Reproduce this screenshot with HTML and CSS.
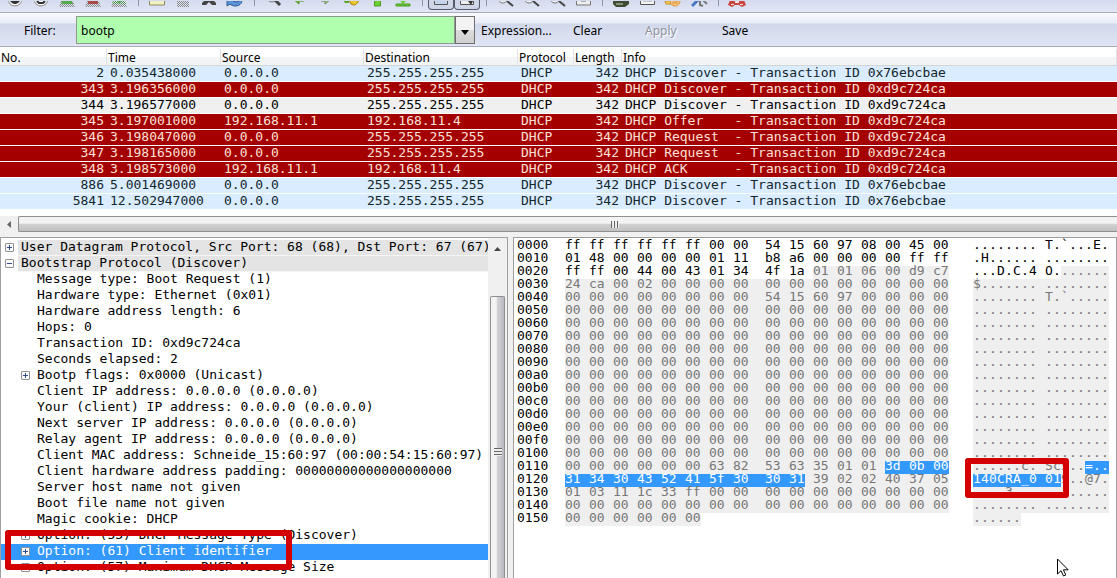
FILE: index.html
```html
<!DOCTYPE html>
<html lang="en">
<head>
    <meta charset="UTF-8">
    <meta name="viewport" content="width=device-width, initial-scale=1.0">
    <title>bootp - Packet Capture</title>
    <link rel="stylesheet" href="styles.css">
</head>
<body>
    <svg class="defs" width="0" height="0">
        <defs>
            <pattern id="hatch-green" width="2" height="2" patternUnits="userSpaceOnUse"><path d="M0 0h1v1H0zM1 1h1v1H1z" fill="#4c9a45"/></pattern>
            <pattern id="hatch-gray" width="2" height="2" patternUnits="userSpaceOnUse"><path d="M0 0h1v1H0zM1 1h1v1H1z" fill="#8c8c8c"/></pattern>
        </defs>
    </svg>

    <div class="toolbar" role="toolbar" aria-label="Main toolbar">
        <div class="tool-group">
            <button class="tool" aria-label="Interfaces"><svg viewBox="0 0 20 8"><circle cx="10" cy="-2" r="7" fill="#f4f4f4" stroke="#888"/><path d="M5 0h10l-2 2-2 1H9L7 2z" fill="#333"/></svg></button>
            <button class="tool" aria-label="Options"><svg viewBox="0 0 20 8"><circle cx="10" cy="-2" r="7" fill="#f4f4f4" stroke="#888"/><path d="M6 0l2 2h4l2-2" fill="none" stroke="#333" stroke-width="2"/></svg></button>
            <button class="tool" aria-label="Start"><svg viewBox="0 0 20 8"><path d="M4 0h12l2 6H2z" fill="url(#hatch-gray)"/><path d="M5 0h10l1 3H4z" fill="#58a850"/></svg></button>
            <button class="tool" aria-label="Stop"><svg viewBox="0 0 20 8"><path d="M4 0h12l2 6H2z" fill="url(#hatch-gray)"/><path d="M5 0h10v3H5z" fill="#a84848"/></svg></button>
            <button class="tool" aria-label="Restart"><svg viewBox="0 0 20 8"><path d="M4 0h12l2 6H2z" fill="url(#hatch-gray)"/><path d="M4 0h12l1 3H3z" fill="url(#hatch-green)"/><path d="M8 0h4l-1 2H9z" fill="#58a850"/></svg></button>
        </div>
        <span class="tool-sep"></span>
        <div class="tool-group">
            <button class="tool" aria-label="Open"><svg viewBox="0 0 20 8"><path d="M2.500-2h15v6h-15z" fill="#f2efc0" stroke="#8d8a62"/></svg></button>
            <button class="tool" aria-label="Save"><svg viewBox="0 0 20 8"><path d="M4 0h12v6H4z" fill="url(#hatch-gray)"/></svg></button>
            <button class="tool" aria-label="Close"><svg viewBox="0 0 20 8"><path d="M7-2h6l4 4v2h-4l-3-3-3 3H3V2z" fill="#444"/></svg></button>
            <button class="tool" aria-label="Reload"><svg viewBox="0 0 20 8"><path d="M2 5V0l4-2h3l-1 2 3 1 6-2c0 4-3 6-7 6-2 0-4-1-5-2z" fill="#5b93d6" stroke="#2c5a96"/></svg></button>
        </div>
        <span class="tool-sep"></span>
        <div class="tool-group">
            <button class="tool" aria-label="Find"><svg viewBox="0 0 20 8"><circle cx="9" cy="-4" r="5" fill="#dfe8f4" stroke="#777"/><path d="M12-1l5 5" stroke="#444" stroke-width="3"/></svg></button>
            <button class="tool" aria-label="Back"><svg viewBox="0 0 20 8"><path d="M4-2l6 5V0h5v-3H4z" fill="#7cc63c" stroke="#4d8f25"/></svg></button>
            <button class="tool" aria-label="Forward"><svg viewBox="0 0 20 8"><path d="M16-2l-6 5V0H6v-3h10z" fill="#a9cf8f" stroke="#64854f"/></svg></button>
            <button class="tool" aria-label="Go to packet"><svg viewBox="0 0 20 8"><path d="M2-1h6v3H4z" fill="#5ea42e"/><path d="M8-1l2 4c3 2 6 1 8-4z" fill="#ecc72c" stroke="#a5830b"/></svg></button>
            <button class="tool" aria-label="First packet"><svg viewBox="0 0 20 8"><path d="M7.500-2h6v7h-6z" fill="#6bd032" stroke="#4d9a26"/></svg></button>
            <button class="tool" aria-label="Last packet"><svg viewBox="0 0 20 8"><path d="M6-1h8l-4 4z" fill="#6bd032"/><path d="M3 3h14v2H3z" fill="#6bd032" stroke="#4d9a26"/></svg></button>
        </div>
        <span class="tool-sep"></span>
        <div class="tool-group">
            <button class="tool pressed" aria-label="Colorize" aria-pressed="true"><svg viewBox="0 0 20 8"><path d="M3.500-2h13v5.500h-13z" fill="#c2d3ee" stroke="#555"/></svg></button>
            <button class="tool pressed" aria-label="Auto scroll" aria-pressed="true"><svg viewBox="0 0 20 8"><path d="M3.500-2h13v5.500h-13z" fill="#eee" stroke="#555"/><path d="M11 0h5l-2 4z" fill="#333"/></svg></button>
        </div>
        <span class="tool-sep"></span>
        <div class="tool-group">
            <button class="tool" aria-label="Zoom in"><svg viewBox="0 0 20 8"><circle cx="8" cy="-3" r="5" fill="#f4f4f4" stroke="#777"/><path d="M12 0l6 5" stroke="#444" stroke-width="2"/></svg></button>
            <button class="tool" aria-label="Zoom out"><svg viewBox="0 0 20 8"><circle cx="8" cy="-3" r="5" fill="#f4f4f4" stroke="#777"/><path d="M12 0l6 5" stroke="#444" stroke-width="2"/></svg></button>
            <button class="tool" aria-label="Zoom 100%"><svg viewBox="0 0 20 8"><circle cx="8" cy="-3" r="5" fill="#f4f4f4" stroke="#777"/><path d="M12 0l6 5" stroke="#444" stroke-width="2"/></svg></button>
            <button class="tool" aria-label="Resize columns"><svg viewBox="0 0 20 8"><path d="M3.500-2h14v6h-14z" fill="#eee" stroke="#777"/><path d="M8-1v2h5v-2" fill="#aaa"/></svg></button>
        </div>
        <span class="tool-sep"></span>
        <div class="tool-group">
            <button class="tool" aria-label="Capture filters"><svg viewBox="0 0 20 8"><path d="M2-1h16v4l-4 3H5L2 3z" fill="#3f4b35"/><path d="M5 2h7v2H5z" fill="#87967a"/></svg></button>
            <button class="tool" aria-label="Display filters"><svg viewBox="0 0 20 8"><path d="M3.500-2h14v5.500h-14z" fill="#f4f4f4" stroke="#555"/><path d="M6 0h9" stroke="#999"/></svg></button>
            <button class="tool" aria-label="Coloring rules"><svg viewBox="0 0 20 8"><path d="M2 0h6v3H3z" fill="#f0d060" stroke="#c38a21"/><circle cx="12" cy="0" r="5" fill="#f6c98a" stroke="#d89030"/><path d="M9 2h6M10 0h5" stroke="#d89030"/></svg></button>
            <button class="tool" aria-label="Preferences"><svg viewBox="0 0 20 8"><path d="M3 5l6-6" stroke="#4a78c4" stroke-width="3"/><path d="M11-1v5l3 1M14-1l4 4" fill="none" stroke="#777" stroke-width="2"/></svg></button>
        </div>
        <span class="tool-sep"></span>
        <div class="tool-group">
            <button class="tool" aria-label="Help"><svg viewBox="0 0 20 8"><path d="M3-1h14l2 5-4 2-3-2H8L5 6 1 4z" fill="#c94840"/><path d="M8-1h4v3H8zM4 3h3v1H4zM13 3h3v1h-3z" fill="#f3e4e2"/></svg></button>
        </div>
    </div>

    <form class="filter-bar">
        <label class="filter-label" for="filter">Filter:</label>
        <div class="filter-box">
            <input class="filter-input" id="filter" type="text" value="bootp">
            <button class="filter-drop" type="button" aria-label="Recent filters"><svg width="8" height="5" viewBox="0 0 8 5"><path d="M0 0h8L4 5z"/></svg></button>
        </div>
        <button class="filter-btn expression" type="button">Expression...</button>
        <button class="filter-btn clear" type="button">Clear</button>
        <button class="filter-btn apply" type="button" disabled>Apply</button>
        <button class="filter-btn save" type="button">Save</button>
    </form>

    <table class="packets">
        <colgroup>
            <col class="col-no"><col class="col-time"><col class="col-source"><col class="col-dest"><col class="col-proto"><col class="col-length"><col>
        </colgroup>
        <thead>
            <tr><th>No.</th><th>Time</th><th>Source</th><th>Destination</th><th>Protocol</th><th>Length</th><th>Info</th></tr>
        </thead>
        <tbody id="packet-rows"></tbody>
    </table>

    <div class="hscroll">
        <button class="hscroll-arrow" aria-label="Scroll left"><svg width="4" height="7" viewBox="0 0 4 7"><path d="M4 0v7L0 3.500z" fill="#666"/></svg></button>
        <div class="hscroll-thumb"><span class="grip"></span></div>
    </div>

    <div class="panes">
        <section class="tree-pane">
            <ul class="tree" id="tree"></ul>
            <div class="vscroll">
                <button class="vscroll-arrow" aria-label="Scroll up"><svg width="7" height="4" viewBox="0 0 7 4"><path d="M0 4h7L3.500 0z" fill="#444"/></svg></button>
                <div class="vscroll-thumb"><span class="grip grip-rows"></span></div>
            </div>
            <div class="mark mark-option"></div>
        </section>
        <section class="hex-pane">
            <div class="hex" id="hex"></div>
            <div class="mark mark-ascii"></div>
            <svg class="cursor" width="12" height="19" viewBox="0 0 12 19"><path d="M.5 1v15l3.500-3.300L6.500 18l2.300-1-2.400-5.200h4.800z" fill="#fff" stroke="#000"/></svg>
        </section>
    </div>

    <script src="script.js"></script>
</body>
</html>
```
FILE: styles.css
```css
* {
    box-sizing: border-box;
    margin: 0;
    padding: 0;
}

body {
    display: flex;
    flex-direction: column;
    height: 100vh;
    overflow: hidden;
    background-color: #f0f0f0;
    color: #000;
    font-family: "Noto Sans", "Open Sans", sans-serif;
    font-size: 12px;
}

button {
    border: none;
    background: none;
    font: inherit;
    color: inherit;
}

.defs {
    position: absolute;
}

/* Toolbar */

.toolbar {
    display: flex;
    flex: none;
    height: 13px;
    padding-left: 2px;
    background: linear-gradient(#d5dbee, #e2e6f5);
    border-bottom: 1px solid #a9adbb;
    overflow: hidden;
}

.tool-group {
    display: flex;
}

.tool {
    width: 26px;
    height: 10px;
    padding: 0 3px;
}

.tool svg {
    display: block;
    width: 20px;
    height: 8px;
}

.pressed {
    padding: 0 2px;
    border: 1px solid #555a68;
    border-top: none;
    border-radius: 0 0 4px 4px;
    background-color: #cfd6e8;
}

.tool-sep {
    width: 1px;
    height: 6px;
    margin: 0 5px 0 6px;
    background-color: #8f94a3;
}

/* Filter bar */

.filter-bar {
    display: flex;
    flex: none;
    align-items: center;
    height: 34px;
    padding-top: 1px;
    background: linear-gradient(#fafbfe 0, #e8ecf7 10px, #d1d8eb 11px, #e1e5f5 100%);
    border-bottom: 1px solid #a9adbb;
}

.filter-label {
    width: 76px;
    padding-left: 24px;
}

.filter-box {
    display: flex;
    width: 399px;
    height: 28px;
}

.filter-input {
    flex: 1;
    min-width: 0;
    padding: 0 4px;
    border: 1px solid #8e9a8e;
    background-color: #afffaf;
    font: inherit;
    outline: none;
}

.filter-drop {
    width: 20px;
    border: 1px solid #707070;
    background: linear-gradient(#f3f3f3 50%, #dcdcdc 50%, #cfcfcf);
}

.filter-btn {
    text-align: left;
}

.expression {
    width: 98px;
    padding-left: 6px;
}

.clear {
    width: 72px;
}

.apply {
    width: 77px;
    color: #8f929c;
    text-shadow: 1px 1px #fff;
}

/* Packet list */

.packets {
    flex: none;
    width: 100%;
    table-layout: fixed;
    border-collapse: separate;
    border-spacing: 0;
    background-color: #fff;
    border-top: 2px solid #fff;
    border-bottom: 6px solid #fff;
}

.col-no { width: 107px; }
.col-time { width: 114px; }
.col-source { width: 143px; }
.col-dest { width: 154px; }
.col-proto { width: 56px; }
.col-length { width: 48px; }

.packets th {
    height: 17px;
    padding: 2px 1px 0;
    font-weight: 400;
    line-height: 14px;
    text-align: left;
    white-space: nowrap;
    background: linear-gradient(#fff 50%, #f3f4f6 50%);
    border-right: 1px solid #e2e3e6;
    border-bottom: 1px solid #d5d5d5;
}

.packets td {
    height: 16px;
    padding: 0 3px;
    font-family: "DejaVu Sans Mono", monospace;
    font-size: 13px;
    line-height: 14px;
    vertical-align: top;
    white-space: pre;
    border-bottom: 1px solid #fff;
}

.packets .num {
    text-align: right;
}

.discover {
    background-color: #daecff;
    color: #12272e;
}

.flagged {
    background-color: #a40000;
    color: #fce0d8;
}

.current {
    background-color: #f0f0f0;
}

/* Scrollbars */

.hscroll {
    display: flex;
    flex: none;
    height: 16px;
    background-color: #f0f0f0;
}

.hscroll-arrow {
    display: flex;
    width: 18px;
    align-items: center;
    justify-content: center;
}

.hscroll-thumb {
    display: flex;
    flex: 1;
    align-items: center;
    justify-content: center;
    padding-left: 94px;
    border: 1px solid #8f8f8f;
    border-right: none;
    border-radius: 2px 0 0 2px;
    background: linear-gradient(#f3f3f3 45%, #d2d2d2 50%, #c0c0c0);
}

.grip {
    width: 8px;
    height: 7px;
    background: repeating-linear-gradient(90deg, #666 0 1px, #eee 1px 3px);
}

.grip-rows {
    height: 8px;
    background: repeating-linear-gradient(#666 0 1px, #eee 1px 3px);
}

.vscroll {
    display: flex;
    flex-direction: column;
    flex: none;
    width: 19px;
    padding: 0 2px;
    background-color: #f0f0f0;
}

.vscroll-arrow {
    height: 19px;
    padding-top: 2px;
}

.vscroll-arrow svg {
    display: block;
    margin: 0 auto;
}

.vscroll-thumb {
    display: flex;
    flex: 1;
    align-items: center;
    justify-content: center;
    margin-top: 39px;
    padding-top: 28px;
    border: 1px solid #8f8f8f;
    border-bottom: none;
    border-radius: 2px 2px 0 0;
    background: linear-gradient(90deg, #f3f3f3 40%, #d2d2d6 50%, #b8b8c0);
}

/* Detail and byte panes */

.panes {
    display: grid;
    flex: 1;
    grid-template-columns: 508fr 604fr;
    gap: 5px;
    min-height: 0;
    margin-top: 5px;
    font-family: "DejaVu Sans Mono", monospace;
    font-size: 13px;
}

.tree-pane,
.hex-pane {
    position: relative;
    min-width: 0;
    overflow: hidden;
    border: 1px solid #a0a0a0;
    border-bottom: none;
    background-color: #fff;
}

.tree-pane {
    display: flex;
}

.tree {
    flex: 1;
    min-width: 0;
    padding-top: 2px;
    overflow: hidden;
    list-style: none;
}

.node {
    display: flex;
    height: 16px;
    padding-left: 4px;
    line-height: 14px;
    white-space: pre;
}

.node-text {
    flex: 1;
    padding-left: 3px;
}

.child {
    padding-left: 20px;
}

.heading .node-text {
    background-color: #e4e4e4;
    border-bottom: 1px solid #f6f6f6;
}

.leaf {
    padding-left: 33px;
}

.selected {
    background-color: #3399ff;
    color: #fff;
}

.toggle {
    flex: none;
    width: 9px;
    height: 9px;
    margin: 3px 4px 0 0;
    border: 1px solid #919191;
    border-radius: 1px;
    background:
        linear-gradient(#2f4a8c, #2f4a8c) center / 5px 1px no-repeat,
        linear-gradient(#2f4a8c, #2f4a8c) center / 1px 5px no-repeat,
        #fafafa;
}

.toggle[aria-expanded="true"] {
    background: linear-gradient(#2f4a8c, #2f4a8c) center / 5px 1px no-repeat, #fafafa;
}

.hex {
    padding-top: 2px;
}

/* line-height below the row height keeps underscores inside the fill */
.hex-row {
    display: flex;
    height: 13px;
    padding-left: 3px;
    line-height: 9px;
    white-space: pre;
}

.offset {
    width: 48px;
}

.byte {
    width: 16px;
}

.gap,
.char {
    width: 8px;
}

.mid {
    width: 16px;
}

.ascii {
    display: flex;
    margin-left: 24px;
}

.proto {
    background-color: #efefef;
    color: #777;
}

.field {
    background-color: #3399ff;
    color: #fff;
}

/* Red callout frames */

.mark {
    position: absolute;
    border: 6px solid #d40000;
    border-radius: 3px;
}

.mark-option {
    top: 292px;
    left: 4px;
    width: 287px;
    height: 40px;
}

.mark-ascii {
    top: 220px;
    left: 451px;
    width: 104px;
    height: 40px;
}

.cursor {
    position: absolute;
    top: 320px;
    left: 543px;
}
```
FILE: script.js
```js
const packets = [
    ["2", "0.035438000", "0.0.0.0", "255.255.255.255", "Discover", "0x76ebcbae", "discover"],
    ["343", "3.196356000", "0.0.0.0", "255.255.255.255", "Discover", "0xd9c724ca", "flagged"],
    ["344", "3.196577000", "0.0.0.0", "255.255.255.255", "Discover", "0xd9c724ca", "current"],
    ["345", "3.197001000", "192.168.11.1", "192.168.11.4", "Offer", "0xd9c724ca", "flagged"],
    ["346", "3.198047000", "0.0.0.0", "255.255.255.255", "Request", "0xd9c724ca", "flagged"],
    ["347", "3.198165000", "0.0.0.0", "255.255.255.255", "Request", "0xd9c724ca", "flagged"],
    ["348", "3.198573000", "192.168.11.1", "192.168.11.4", "ACK", "0xd9c724ca", "flagged"],
    ["886", "5.001469000", "0.0.0.0", "255.255.255.255", "Discover", "0x76ebcbae", "discover"],
    ["5841", "12.502947000", "0.0.0.0", "255.255.255.255", "Discover", "0x76ebcbae", "discover"]
];

document.getElementById("packet-rows").innerHTML = packets.map(([no, time, src, dst, type, id, state]) => `
    <tr class="${state}">
        <td class="num">${no}</td><td>${time}</td><td>${src}</td><td>${dst}</td><td>DHCP</td>
        <td class="num">342</td><td>DHCP ${type.padEnd(8)} - Transaction ID ${id}</td>
    </tr>`).join("");

// kind: "+" collapsed, "-" expanded, "" leaf
const nodes = [
    ["+", "User Datagram Protocol, Src Port: 68 (68), Dst Port: 67 (67)", "heading"],
    ["-", "Bootstrap Protocol (Discover)", "heading"],
    ["", "Message type: Boot Request (1)", "leaf"],
    ["", "Hardware type: Ethernet (0x01)", "leaf"],
    ["", "Hardware address length: 6", "leaf"],
    ["", "Hops: 0", "leaf"],
    ["", "Transaction ID: 0xd9c724ca", "leaf"],
    ["", "Seconds elapsed: 2", "leaf"],
    ["+", "Bootp flags: 0x0000 (Unicast)", "child"],
    ["", "Client IP address: 0.0.0.0 (0.0.0.0)", "leaf"],
    ["", "Your (client) IP address: 0.0.0.0 (0.0.0.0)", "leaf"],
    ["", "Next server IP address: 0.0.0.0 (0.0.0.0)", "leaf"],
    ["", "Relay agent IP address: 0.0.0.0 (0.0.0.0)", "leaf"],
    ["", "Client MAC address: Schneide_15:60:97 (00:00:54:15:60:97)", "leaf"],
    ["", "Client hardware address padding: 00000000000000000000", "leaf"],
    ["", "Server host name not given", "leaf"],
    ["", "Boot file name not given", "leaf"],
    ["", "Magic cookie: DHCP", "leaf"],
    ["+", "Option: (53) DHCP Message Type (Discover)", "child"],
    ["+", "Option: (61) Client identifier", "child selected"],
    ["+", "Option: (57) Maximum DHCP Message Size", "child"]
];

document.getElementById("tree").innerHTML = nodes.map(([kind, text, cls]) => {
    const toggle = kind ? `<button class="toggle" aria-expanded="${kind === "-"}" aria-label="Toggle"></button>` : "";
    return `<li class="node ${cls}">${toggle}<span class="node-text">${text}</span></li>`;
}).join("");

const zeros = "00 ".repeat(16).trim();
const dump = [
    "ff ff ff ff ff ff 00 00 54 15 60 97 08 00 45 00",
    "01 48 00 00 00 00 01 11 b8 a6 00 00 00 00 ff ff",
    "ff ff 00 44 00 43 01 34 4f 1a 01 01 06 00 d9 c7",
    "24 ca 00 02 00 00 00 00 00 00 00 00 00 00 00 00",
    "00 00 00 00 00 00 00 00 54 15 60 97 00 00 00 00",
    ...Array(12).fill(zeros),
    "00 00 00 00 00 00 63 82 53 63 35 01 01 3d 0b 00",
    "31 34 30 43 52 41 5f 30 30 31 39 02 02 40 37 05",
    "01 03 11 1c 33 ff 00 00 00 00 00 00 00 00 00 00",
    zeros,
    "00 00 00 00 00 00"
];

const PROTO_START = 0x2a;
const FIELD_START = 0x11d;
const FIELD_END = 0x129;

function state(pos) {
    if (pos >= FIELD_START && pos <= FIELD_END) return "field";
    return pos >= PROTO_START ? "proto" : "";
}

function gapState(pos) {
    const next = state(pos + 1);
    return state(pos) === next ? next : (state(pos) ? "proto" : "");
}

document.getElementById("hex").innerHTML = dump.map((line, row) => {
    const bytes = line.split(" ");
    let hex = "";
    let ascii = "";
    bytes.forEach((byte, i) => {
        const pos = row * 16 + i;
        const code = parseInt(byte, 16);
        const char = code > 32 && code < 127 ? String.fromCharCode(code) : ".";
        hex += `<span class="byte ${state(pos)}">${byte}</span>`;
        ascii += `<span class="char ${state(pos)}">${char}</span>`;
        if (i < bytes.length - 1) {
            hex += `<span class="gap ${i === 7 ? "mid" : ""} ${gapState(pos)}"> </span>`;
            if (i === 7) ascii += `<span class="char ${gapState(pos)}"> </span>`;
        }
    });
    // pad a partial last line so its text column stays aligned
    for (let i = bytes.length; i < 16; i++) {
        hex += `<span class="gap ${i === 8 ? "mid" : ""}"> </span><span class="byte"></span>`;
    }
    const offset = (row * 16).toString(16).padStart(4, "0");
    return `<div class="hex-row"><span class="offset">${offset}</span>${hex}<span class="ascii">${ascii}</span></div>`;
}).join("");
```
